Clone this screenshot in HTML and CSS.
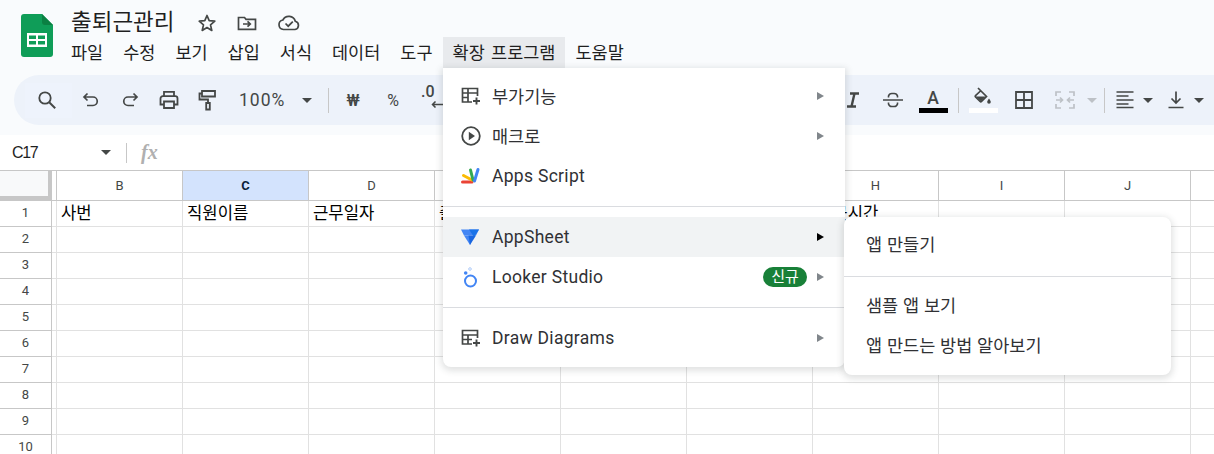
FILE: index.html
```html
<!DOCTYPE html>
<html lang="ko">
<head>
<meta charset="UTF-8">
<title>출퇴근관리</title>
<link rel="stylesheet" href="styles.css">
</head>
<body>
<div class="header">
  <div class="titlebar">
    <svg class="logo" width="32" height="43" viewBox="0 0 32 43">
      <path d="M3 0H21L32 11V40a3 3 0 0 1-3 3H3a3 3 0 0 1-3-3V3a3 3 0 0 1 3-3z" fill="#0f9d58"/>
      <path d="M21 0L32 11H24a3 3 0 0 1-3-3z" fill="#0b8043"/>
      <path d="M6 19H26V33H6zM8 21.500V25H15V21.500zM17 21.500V25H24V21.500zM8 27V30.500H15V27zM17 27V30.500H24V27z" fill="#fff" fill-rule="evenodd"/>
    </svg>
    <div class="titlecol">
      <div class="titlerow">
        <span class="doc-title">출퇴근관리</span>
        <svg class="title-icon" width="20" height="20" viewBox="0 0 20 20"><path d="M10 2.500l2.200 5.200 5.600.5-4.300 3.700 1.300 5.500L10 14.500l-4.800 2.900 1.300-5.500-4.300-3.700 5.600-.5z" fill="none" stroke="#444746" stroke-width="1.700" stroke-linejoin="round"/></svg>
        <svg class="title-icon" width="20" height="20" viewBox="0 0 20 20"><path d="M1.500 4.500h6l1.500 1.800h9.500v10h-17z" fill="none" stroke="#444746" stroke-width="1.700"/><path d="M6 11h7M10.500 8.300L13.300 11l-2.800 2.700" fill="none" stroke="#444746" stroke-width="1.700"/></svg>
        <svg class="title-icon" width="24" height="20" viewBox="0 0 24 20"><path d="M6.500 16.500a4.800 4.800 0 0 1-.6-9.500 6.700 6.700 0 0 1 12.400 1.300 4.200 4.200 0 0 1-.3 8.200z" fill="none" stroke="#444746" stroke-width="1.700"/><path d="M8.500 10.500l2.700 2.700 4.600-4.600" fill="none" stroke="#444746" stroke-width="1.700"/></svg>
      </div>
      <div class="menubar">
        <span class="menubar-item">파일</span>
        <span class="menubar-item">수정</span>
        <span class="menubar-item">보기</span>
        <span class="menubar-item">삽입</span>
        <span class="menubar-item">서식</span>
        <span class="menubar-item">데이터</span>
        <span class="menubar-item">도구</span>
        <span class="menubar-item active">확장 프로그램</span>
        <span class="menubar-item">도움말</span>
      </div>
    </div>
  </div>

  <div class="toolbar">
    <div class="tool search-tool">
      <svg width="22" height="22" viewBox="0 0 22 22"><circle cx="9" cy="9" r="5.700" fill="none" stroke="#444746" stroke-width="1.800"/><path d="M13.200 13.200l6 6" stroke="#444746" stroke-width="2"/></svg>
    </div>
    <div class="tool">
      <svg width="20" height="20" viewBox="0 0 20 20"><path d="M6.500 3.500L3 7l3.500 3.500M3.500 7H12a4.200 4.200 0 0 1 0 8.500H6" fill="none" stroke="#444746" stroke-width="1.700"/></svg>
    </div>
    <div class="tool">
      <svg width="20" height="20" viewBox="0 0 20 20"><path d="M13.500 3.500L17 7l-3.500 3.500M16.500 7H8a4.200 4.200 0 0 0 0 8.500h6" fill="none" stroke="#444746" stroke-width="1.700"/></svg>
    </div>
    <div class="tool">
      <svg width="22" height="22" viewBox="0 0 22 22"><path d="M6 7V2.800h10V7M5.500 15.500H2.500V9.500a2.300 2.300 0 0 1 2.300-2.300h12.400a2.300 2.300 0 0 1 2.300 2.300v6h-3M6 12.500h10v6.500H6z" fill="none" stroke="#444746" stroke-width="1.800"/></svg>
    </div>
    <div class="tool">
      <svg width="20" height="22" viewBox="0 0 20 22"><path d="M4 2h13v5.500H4zM4 4.500H1.500v6H10V14M8.200 14h3.600v6.500H8.200z" fill="none" stroke="#444746" stroke-width="1.800"/></svg>
    </div>
    <span class="zoom-value">100%</span>
    <i class="caret zoom-caret"></i>
    <i class="tool-sep first-sep"></i>
    <div class="tool fmt"><span class="won">₩</span></div>
    <div class="tool fmt"><span class="pct">%</span></div>
    <div class="tool fmt dec-tool">
      <span class="dec">.0</span>
      <svg class="dec-arrow" width="14" height="7" viewBox="0 0 14 7"><path d="M14 3.500H1.500M4.500 .5L1.500 3.500l3 3" fill="none" stroke="#444746" stroke-width="1.500"/></svg>
    </div>

    <div class="toolbar-right">
      <div class="tool">
        <svg width="18" height="18" viewBox="0 0 18 18"><path d="M6 2.500h9M3 15.500h9M10.500 2.500l-3 13" fill="none" stroke="#444746" stroke-width="2.400"/></svg>
      </div>
      <div class="tool">
        <svg width="22" height="20" viewBox="0 0 22 20"><path d="M1 10h20M6.500 7.500V6a3.500 3.500 0 0 1 3.500-2.500h2A3.500 3.500 0 0 1 15.500 6v1.500M6.500 12.500V14a3.500 3.500 0 0 0 3.500 2.500h2a3.500 3.500 0 0 0 3.500-2.500v-1.500" fill="none" stroke="#444746" stroke-width="1.600"/></svg>
      </div>
      <div class="tool color-tool">
        <span class="letter-a">A</span>
        <i class="color-bar black"></i>
      </div>
      <i class="tool-sep"></i>
      <div class="tool color-tool fill">
        <svg width="20" height="20" viewBox="0 0 20 20"><path d="M5 1l8.500 8.500-5 5a1 1 0 0 1-1.400 0L2.500 10a1 1 0 0 1 0-1.400L8 3.500" fill="none" stroke="#444746" stroke-width="1.700"/><path d="M2.500 9.500h10.500l-5 5z" fill="#444746"/><path d="M16 11.500c1 1.500 1.800 2.500 1.800 3.500a1.800 1.800 0 0 1-3.600 0c0-1 .8-2 1.800-3.500z" fill="#444746"/></svg>
        <i class="color-bar white"></i>
      </div>
      <div class="tool borders">
        <svg width="20" height="20" viewBox="0 0 20 20"><path d="M2 2h16v16H2zM10 2v16M2 10h16" fill="none" stroke="#444746" stroke-width="1.800"/></svg>
      </div>
      <div class="tool merge">
        <svg width="22" height="20" viewBox="0 0 22 20"><path d="M2 6V2h5M2 14v4h5M20 6V2h-5M20 14v4h-5M2 10h6M6 7.500L8.500 10 6 12.500M20 10h-6M16 7.500L13.500 10l2.500 2.500" fill="none" stroke="#bdc1c6" stroke-width="1.700"/></svg>
      </div>
      <i class="caret off"></i>
      <i class="tool-sep right-sep"></i>
      <div class="tool narrow">
        <svg width="20" height="20" viewBox="0 0 20 20"><path d="M1.500 2.500h17M1.500 6.500h12M1.500 10.500h17M1.500 14.500h12M1.500 18h17" transform="translate(0 -.500)" fill="none" stroke="#444746" stroke-width="1.500"/></svg>
      </div>
      <i class="caret"></i>
      <div class="tool narrow">
        <svg width="18" height="20" viewBox="0 0 18 20"><path d="M9 1.500v11M4.500 8.500L9 13l4.500-4.500M1.500 17.500h15" fill="none" stroke="#444746" stroke-width="1.700"/></svg>
      </div>
      <i class="caret"></i>
    </div>
  </div>
</div>

<div class="formula-bar">
  <span class="name-box">C17</span>
  <i class="caret"></i>
  <i class="formula-sep"></i>
  <span class="fx">fx</span>
</div>

<div class="sheet">
  <table class="grid">
    <colgroup>
      <col class="col-head"><col class="col-gap">
      <col class="col-cell"><col class="col-cell"><col class="col-cell"><col class="col-cell"><col class="col-cell">
      <col class="col-cell"><col class="col-cell"><col class="col-cell"><col class="col-cell"><col class="col-cell">
    </colgroup>
    <tr class="head-row">
      <th class="corner"></th><th></th>
      <th>B</th><th class="selected">C</th><th>D</th><th></th><th></th><th></th><th>H</th><th>I</th><th>J</th><th></th>
    </tr>
    <tr><th>1</th><td></td><td>사번</td><td>직원이름</td><td>근무일자</td><td>출근시간</td><td></td><td></td><td>퇴근시간</td><td></td><td></td><td></td></tr>
    <tr><th>2</th><td></td><td></td><td></td><td></td><td></td><td></td><td></td><td></td><td></td><td></td><td></td></tr>
    <tr><th>3</th><td></td><td></td><td></td><td></td><td></td><td></td><td></td><td></td><td></td><td></td><td></td></tr>
    <tr><th>4</th><td></td><td></td><td></td><td></td><td></td><td></td><td></td><td></td><td></td><td></td><td></td></tr>
    <tr><th>5</th><td></td><td></td><td></td><td></td><td></td><td></td><td></td><td></td><td></td><td></td><td></td></tr>
    <tr><th>6</th><td></td><td></td><td></td><td></td><td></td><td></td><td></td><td></td><td></td><td></td><td></td></tr>
    <tr><th>7</th><td></td><td></td><td></td><td></td><td></td><td></td><td></td><td></td><td></td><td></td><td></td></tr>
    <tr><th>8</th><td></td><td></td><td></td><td></td><td></td><td></td><td></td><td></td><td></td><td></td><td></td></tr>
    <tr><th>9</th><td></td><td></td><td></td><td></td><td></td><td></td><td></td><td></td><td></td><td></td><td></td></tr>
    <tr><th>10</th><td></td><td></td><td></td><td></td><td></td><td></td><td></td><td></td><td></td><td></td><td></td></tr>
  </table>
</div>

<!-- 확장 프로그램 메뉴 -->
<div class="menu ext-menu">
  <div class="menu-item">
    <svg class="menu-icon" width="20" height="20" viewBox="0 0 20 20"><path d="M11 16H1.500V2.500h15V10M1.500 7h15M7 2.500V16M1.500 11.500H7" fill="none" stroke="#444746" stroke-width="1.700"/><path d="M15.500 11.500v7M12 15h7" stroke="#444746" stroke-width="1.900"/></svg>
    <span class="ko">부가기능</span><i class="arrow"></i>
  </div>
  <div class="menu-item">
    <svg class="menu-icon" width="20" height="20" viewBox="0 0 20 20"><circle cx="10" cy="10" r="8.800" fill="none" stroke="#444746" stroke-width="1.800"/><path d="M7.800 5.800v8.400l6.200-4.200z" fill="#444746"/></svg>
    <span class="ko">매크로</span><i class="arrow"></i>
  </div>
  <div class="menu-item">
    <svg class="menu-icon script-icon" width="22" height="20" viewBox="0 0 22 20">
      <path d="M2.500 16H12" stroke="#ea4335" stroke-width="3" stroke-linecap="round"/>
      <path d="M3.500 9.500l8.500 4.500" stroke="#fbbc04" stroke-width="3" stroke-linecap="round"/>
      <path d="M10.500 4l2.500 10" stroke="#34a853" stroke-width="3" stroke-linecap="round"/>
      <path d="M18 3.500l-3.500 11.500" stroke="#4285f4" stroke-width="3" stroke-linecap="round"/>
    </svg>
    <span class="latin">Apps Script</span>
  </div>
  <div class="menu-sep"></div>
  <div class="menu-item hover">
    <svg class="menu-icon" width="20" height="20" viewBox="0 0 20 20">
      <path d="M0 2.500H18L15 8.500H3z" fill="#4285f4"/>
      <path d="M3 8.500H8.500L11 13.500 9 18z" fill="#4285f4"/>
      <path d="M15 8.500L9 18 7.500 8.500z" fill="#1a66e0"/>
      <path d="M8 2.500H18L13 10z" fill="#1a73e8"/>
    </svg>
    <span class="latin">AppSheet</span><i class="arrow dark"></i>
  </div>
  <div class="menu-item">
    <svg class="menu-icon" width="20" height="22" viewBox="0 0 20 22">
      <circle cx="9.500" cy="15" r="5.500" fill="none" stroke="#4285f4" stroke-width="2"/>
      <circle cx="4.700" cy="7" r="1.800" fill="#4285f4"/>
      <circle cx="9" cy="3" r="1.300" fill="none" stroke="#aecbfa"/>
    </svg>
    <span class="latin">Looker Studio</span><span class="badge">신규</span><i class="arrow near"></i>
  </div>
  <div class="menu-sep"></div>
  <div class="menu-item">
    <svg class="menu-icon" width="20" height="20" viewBox="0 0 20 20"><path d="M11 16H1.500V2.500h15V10M1.500 7h15M7 7V16M1.500 11.500H11" fill="none" stroke="#444746" stroke-width="1.700"/><path d="M15.500 11.500v7M12 15h7" stroke="#444746" stroke-width="1.900"/></svg>
    <span class="latin">Draw Diagrams</span><i class="arrow"></i>
  </div>
</div>

<!-- AppSheet 하위 메뉴 -->
<div class="menu sub-menu">
  <div class="menu-item">앱 만들기</div>
  <div class="menu-sep"></div>
  <div class="menu-item">샘플 앱 보기</div>
  <div class="menu-item">앱 만드는 방법 알아보기</div>
</div>
</body>
</html>
```

FILE: styles.css
```css
html, body {
  margin: 0;
  height: 454px;
  overflow: hidden;
  background: #fff;
  font-family: Roboto, "Noto Sans CJK KR", sans-serif;
  color: #1f1f1f;
}

/* 상단 영역 */
.header {
  height: 135px;
  box-sizing: border-box;
  background: #f9fbfd;
  padding-top: 14px;
}
.titlebar {
  display: flex;
  height: 61px;
}
.logo {
  margin-left: 21px;
  flex: none;
}
.titlecol {
  margin-left: 8px;
}
.titlerow {
  display: flex;
  align-items: center;
  height: 23px;
  padding-left: 10px;
  margin-top: -3px;
  margin-bottom: 3px;
}
.doc-title {
  font-size: 22.5px;
  line-height: 23px;
  width: 126px;
}
.title-icon {
  margin-right: 20px;
}
.menubar {
  display: flex;
  height: 31px;
}
.menubar-item {
  padding: 0 10px;
  font-size: 17.5px;
  line-height: 32px;
  white-space: nowrap;
}
.menubar-item.active {
  background: #e8eaed;
  word-spacing: 2px;
}

/* 도구 모음 */
.toolbar {
  display: flex;
  align-items: center;
  height: 50px;
  margin-left: 14px;
  border-radius: 25px 0 0 25px;
  background: #edf2fa;
  color: #444746;
}
.tool {
  flex: none;
  display: flex;
  align-items: center;
  justify-content: center;
  width: 39px;
  height: 35px;
}
.search-tool {
  box-sizing: border-box;
  width: 47px;
  margin-left: 11px;
  padding-right: 4px;
  background: #eef3fc;
}
.search-tool + .tool {
  margin-left: -1px;
}
.zoom-value {
  margin-left: 12px;
  width: 50px;
  font-size: 17.5px;
  letter-spacing: 1px;
  color: #444746;
}
.caret {
  flex: none;
  display: block;
  width: 0;
  height: 0;
  border-left: 5px solid transparent;
  border-right: 5px solid transparent;
  border-top: 5px solid #444746;
}
.zoom-caret {
  margin-left: 13px;
}
.tool-sep {
  flex: none;
  display: block;
  width: 1px;
  height: 25px;
  margin: 0 4px 0 5px;
  background: #c7c7c7;
}
.first-sep {
  margin: 0 4px 0 16px;
}
.right-sep {
  margin: 0 5px 0 0;
}
.fmt {
  width: 40px;
  font-size: 16px;
}
.won {
  font-weight: 500;
  font-size: 17px;
}
.pct {
  font-size: 16px;
}
.dec-tool {
  flex-direction: column;
  align-items: flex-start;
  justify-content: flex-start;
  padding-top: 2px;
}
.dec {
  font-weight: 500;
  font-size: 16px;
  line-height: 16px;
  margin-left: 8px;
}
.dec-arrow {
  margin: 1px 0 0 18px;
}
.toolbar-right {
  display: flex;
  align-items: center;
  margin-left: auto;
}
.toolbar-right .tool {
  width: 40px;
}
.color-tool {
  flex-direction: column;
  justify-content: flex-end;
  height: 30px;
}
.letter-a {
  font-size: 17.5px;
  line-height: 20px;
  font-weight: 500;
}
.color-bar {
  display: block;
  width: 29px;
  height: 5px;
  margin-bottom: 2px;
}
.color-bar.black {
  background: #000;
}
.color-bar.white {
  background: #fff;
}
.fill {
  margin-right: 1px;
}
.fill svg {
  margin-bottom: 1px;
}
.borders {
  margin-right: 1px;
}
.merge {
  margin-right: 2px;
}
.toolbar-right .narrow {
  width: 30px;
  margin-right: 3px;
}
.toolbar-right .caret {
  margin-right: 8px;
}
.toolbar-right .caret.off {
  border-top-color: #bdc1c6;
  margin-right: 7px;
}
.toolbar-right > .caret:last-child {
  margin-right: 10px;
}

/* 수식 입력줄 */
.formula-bar {
  display: flex;
  align-items: center;
  height: 35px;
  background: #fff;
  border-bottom: 1px solid #c7c7c7;
}
.name-box {
  width: 89px;
  margin-left: 12px;
  font-family: "Liberation Sans", sans-serif;
  font-size: 16px;
  letter-spacing: -1.300px;
  color: #1f1f1f;
}
.formula-sep {
  display: block;
  width: 1px;
  height: 20px;
  margin-left: 15px;
  background: #c7c7c7;
}
.fx {
  margin-left: 14px;
  font-family: "Liberation Serif", serif;
  font-style: italic;
  font-weight: 700;
  font-size: 20px;
  color: #b0b0b0;
}

/* 시트 */
.sheet {
  height: 283px;
  overflow: hidden;
}
.grid {
  table-layout: fixed;
  width: 1316px;
  border-collapse: separate;
  border-spacing: 0;
}
.col-head {
  width: 52px;
}
.col-gap {
  width: 5px;
}
.col-cell {
  width: 126px;
}
.grid th,
.grid td {
  box-sizing: border-box;
  height: 26px;
  padding: 0;
  border-right: 1px solid #e1e1e1;
  border-bottom: 1px solid #e1e1e1;
  overflow: hidden;
  white-space: nowrap;
}
.grid td {
  padding: 0 3px 0 4px;
  font-size: 16.67px;
  line-height: 24px;
  color: #000;
}
.grid th {
  padding-bottom: 2px;
  font-weight: 400;
  font-size: 13px;
  color: #444746;
  text-align: center;
  border-right-color: #c7c7c7;
  border-bottom-color: #c7c7c7;
}
.head-row th {
  height: 30px;
  padding-bottom: 0;
  font-size: 13px;
  border-bottom-color: #c7c7c7;
}
.head-row th.selected {
  background: #d3e3fd;
  color: #0b1f3b;
  font-weight: 700;
}
.head-row th.corner {
  background: #f8f9fa;
  border-right: 4px solid #c7c7c7;
  border-bottom: 5px solid #c7c7c7;
}
.grid td:nth-child(2) {
  padding: 0;
}

/* 메뉴 */
.menu {
  position: absolute;
  background: #fff;
  box-shadow: 0 2px 6px 2px rgba(60, 64, 67, .15);
  font-size: 17.5px;
  color: #303134;
}
.ext-menu {
  left: 443px;
  top: 68px;
  width: 402px;
  padding: 8px 0 9px;
  border-radius: 0 0 8px 8px;
}
.sub-menu {
  left: 844px;
  top: 217px;
  width: 327px;
  padding: 8px 0 9px;
  border-radius: 8px;
  word-spacing: .5px;
}
.menu-item {
  display: flex;
  align-items: center;
  height: 40px;
  white-space: nowrap;
}
.ext-menu .menu-item {
  padding: 0 21px 0 18px;
}
.sub-menu .menu-item {
  box-sizing: border-box;
  padding: 0 22px 3px;
}
.menu-item.hover {
  background: #f1f3f4;
}
.menu-icon {
  flex: none;
  margin-right: 11px;
}
.script-icon {
  margin-left: -1px;
  margin-right: 10px;
}
.ko {
  padding-bottom: 2px;
}
.latin {
  letter-spacing: .3px;
}
.arrow {
  display: block;
  margin-left: auto;
  width: 0;
  height: 0;
  border-top: 4px solid transparent;
  border-bottom: 4px solid transparent;
  border-left: 7px solid #80868b;
}
.arrow.dark {
  border-left-color: #000;
}
.arrow.near {
  margin-left: 10px;
}
.menu-sep {
  height: 1px;
  margin: 10px 0;
  background: #dadce0;
}
.sub-menu .menu-sep {
  margin: 11px 0 9px;
}
.badge {
  margin-left: auto;
  width: 44px;
  height: 20px;
  border-radius: 10px;
  background: #188038;
  color: #fff;
  font-size: 15px;
  line-height: 20px;
  text-align: center;
}
```
